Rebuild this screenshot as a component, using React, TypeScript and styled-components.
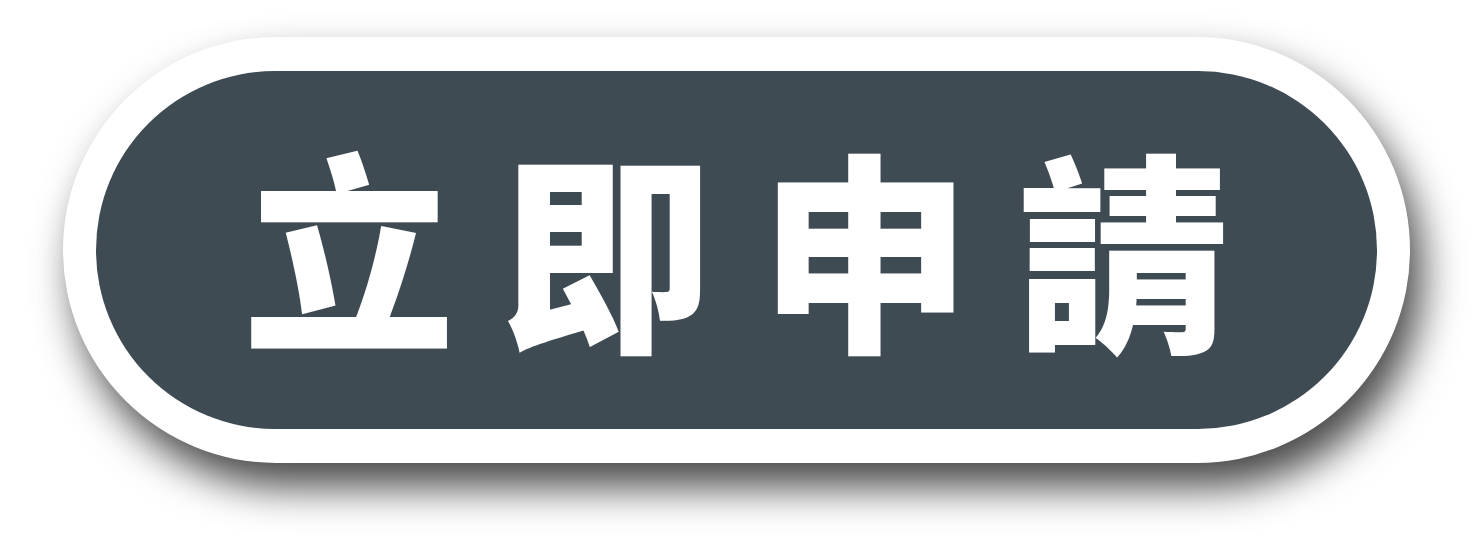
import React from "react";
import styled, { createGlobalStyle } from "styled-components";

const GlobalStyle = createGlobalStyle`
    html, body {
        margin: 0;
        padding: 0;
        background: #ffffff;
    }
`;

const Stage = styled.div`
    width: 1472px;
    height: 559px;
    display: flex;
    justify-content: center;
    align-items: flex-start;
    padding-top: 37px;
    box-sizing: border-box;
`;

const OuterPill = styled.div`
    width: 1347px;
    height: 426px;
    padding: 34px 33px;
    box-sizing: border-box;
    border-radius: 213px;
    background: #ffffff;
    box-shadow: 12px 24px 40px rgba(0, 0, 0, 0.72);
    display: flex;
`;

const InnerPill = styled.button`
    flex: 1;
    border: none;
    border-radius: 180px;
    background: #3e4b53;
    display: flex;
    justify-content: center;
    align-items: center;
    cursor: pointer;
    padding: 0 0 12px 0;
`;

const Label = styled.span`
    display: flex;
    gap: 46px;
    color: #ffffff;
    font-family: "Noto Sans CJK TC", "Noto Sans CJK SC", sans-serif;
    font-weight: 900;
    font-size: 212px;
    line-height: 1;
`;

const Glyph = styled.span`
    display: block;
`;

const App: React.FC = () => {
    const text = "立即申請";
    return (
        <>
            <GlobalStyle />
            <Stage>
                <OuterPill>
                    <InnerPill>
                        <Label>
                            {text.split("").map((ch, i) => (
                                <Glyph key={i}>{ch}</Glyph>
                            ))}
                        </Label>
                    </InnerPill>
                </OuterPill>
            </Stage>
        </>
    );
};

export default App;
